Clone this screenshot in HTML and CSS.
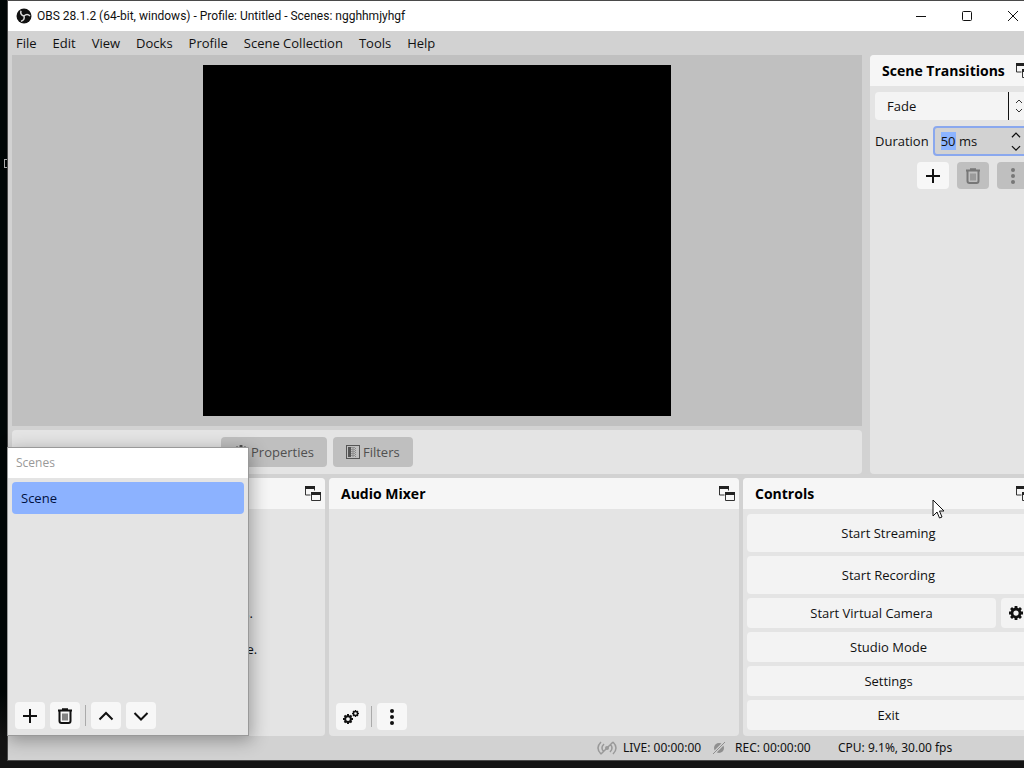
FILE: index.html
```html
<!DOCTYPE html>
<html lang="en">
<head>
<meta charset="utf-8">
<title>OBS 28.1.2</title>
<link rel="stylesheet" href="styles.css">
</head>
<body class="desktop">
<svg class="defs" aria-hidden="true">
  <symbol id="popout" viewBox="0 0 16 16"><path d="M.5 1v8h5M9.500 1v3.500M.5 1h9M6.500 7v7.500h9V7z" fill="none" stroke="#333"/><path d="M0 0h10v3H0zM6 6h10v3H6z" fill="#222"/></symbol>
  <symbol id="plus" viewBox="0 0 16 16"><path d="M8 1v14M1 8h14" fill="none" stroke="currentColor" stroke-width="2"/></symbol>
  <symbol id="trash" viewBox="0 0 16 16"><path d="M1 2.500h14M5 1.200h6M2.500 3v10q0 2 2 2h7q2 0 2-2V3" fill="none" stroke="currentColor" stroke-width="2"/><path d="M6 5.500v7M8 5.500v7M10 5.500v7" stroke="currentColor"/></symbol>
  <symbol id="up" viewBox="0 0 16 16"><path d="M1.500 11.500 8 5l6.500 6.500" fill="none" stroke="currentColor" stroke-width="2"/></symbol>
  <symbol id="down" viewBox="0 0 16 16"><path d="M1.500 5 8 11.500 14.500 5" fill="none" stroke="currentColor" stroke-width="2"/></symbol>
  <symbol id="dots" viewBox="0 0 16 16"><g fill="currentColor"><circle cx="8" cy="2" r="2"/><circle cx="8" cy="8" r="2"/><circle cx="8" cy="14" r="2"/></g></symbol>
  <symbol id="gear" viewBox="0 0 16 16"><circle cx="8" cy="8" r="4.600" fill="none" stroke="currentColor" stroke-width="3.200"/><path d="M8 0v3M8 13v3M0 8h3M13 8h3M2.350 2.350l2.100 2.100M11.550 11.550l2.100 2.100M13.650 2.350l-2.100 2.100M4.450 11.550l-2.100 2.100" stroke="currentColor" stroke-width="3.200"/></symbol>
</svg>
<div class="desktop-icon"></div>
<div class="window">
  <header class="titlebar">
    <svg class="logo" viewBox="0 0 16 16"><circle cx="8" cy="8" r="7.500" fill="#111"/><g fill="none" stroke="#ddd" stroke-width="1.500"><path d="M5 2.800c-.8 2.600.3 4.500 3 5.200"/><path d="M5 2.800c-.8 2.600.3 4.500 3 5.200" transform="rotate(120 8 8)"/><path d="M5 2.800c-.8 2.600.3 4.500 3 5.200" transform="rotate(240 8 8)"/></g></svg>
    <h1 class="title">OBS 28.1.2 (64-bit, windows) - Profile: Untitled - Scenes: ngghhmjyhgf</h1>
    <button class="caption" aria-label="Minimize"><svg viewBox="0 0 10 10"><path d="M0 5.500h10"/></svg></button>
    <button class="caption" aria-label="Maximize"><svg viewBox="0 0 10 10"><rect x=".5" y=".5" width="9" height="9" rx="1"/></svg></button>
    <button class="caption" aria-label="Close"><svg viewBox="0 0 10 10"><path d="m0 0 10 10M10 0 0 10"/></svg></button>
  </header>
  <nav class="menu">
    <button>File</button><button>Edit</button><button>View</button><button>Docks</button><button>Profile</button><button>Scene Collection</button><button>Tools</button><button>Help</button>
  </nav>
  <main class="workspace">
    <div class="upper">
      <div class="center">
        <section class="preview"><div class="canvas"></div></section>
        <section class="context">
          <span class="context-label"></span>
          <button class="tool" disabled><svg class="icon14"><use href="#gear"/></svg>Properties</button>
          <button class="tool" disabled><svg class="icon14" viewBox="0 0 14 14"><rect x=".5" y=".5" width="13" height="13" fill="none" stroke="#555"/><path d="M2 2h3v10H2z" fill="#555"/><path d="M6 2v10M8 2v10" stroke="#666" stroke-dasharray="1 1"/><path d="M7 3v10M9.500 3v10" stroke="#888" stroke-dasharray="1 1"/></svg>Filters</button>
        </section>
      </div>
      <section class="dock">
        <header class="dock-head"><h2>Scene Transitions</h2><svg class="popout"><use href="#popout"/></svg></header>
        <div class="transitions">
          <div class="combo"><select aria-label="Transition"><option>Fade</option></select><svg viewBox="0 0 8 14"><path d="m1 4 3-3 3 3M1 10l3 3 3-3"/></svg></div>
          <div class="duration"><label for="dur">Duration</label>
            <div class="spin"><input id="dur" type="text" value="50 ms"><span class="steps"><button aria-label="Increase"><svg><use href="#up"/></svg></button><button aria-label="Decrease"><svg><use href="#down"/></svg></button></span></div>
          </div>
          <div class="trans-tools"><button class="mini" aria-label="Add transition"><svg><use href="#plus"/></svg></button><button class="mini" aria-label="Remove transition" disabled><svg><use href="#trash"/></svg></button><button class="mini" aria-label="Transition options" disabled><svg><use href="#dots"/></svg></button></div>
        </div>
      </section>
    </div>
    <div class="lower">
      <section class="dock" aria-label="Sources">
        <header class="dock-head"><span></span><svg class="popout"><use href="#popout"/></svg></header>
        <p class="hint">You don't have any sources.<br>Click the + button below,<br>or right click here to add one.</p>
      </section>
      <section class="dock">
        <header class="dock-head"><h2>Audio Mixer</h2><svg class="popout"><use href="#popout"/></svg></header>
        <div class="fill"></div>
        <div class="tools"><button class="mini" aria-label="Advanced audio"><svg viewBox="0 0 16 16"><svg x="0" y="5" width="10" height="10"><use href="#gear"/></svg><svg x="9" y="1" width="7" height="7"><use href="#gear"/></svg></svg></button><i class="sep"></i><button class="mini" aria-label="Mixer menu"><svg><use href="#dots"/></svg></button></div>
      </section>
      <section class="dock">
        <header class="dock-head"><h2>Controls</h2><svg class="popout"><use href="#popout"/></svg></header>
        <div class="controls">
          <button class="tall">Start Streaming</button>
          <button class="tall">Start Recording</button>
          <div class="camera"><button>Start Virtual Camera</button><button aria-label="Virtual camera settings"><svg><use href="#gear"/></svg></button></div>
          <button>Studio Mode</button>
          <button>Settings</button>
          <button>Exit</button>
        </div>
      </section>
    </div>
  </main>
  <footer class="status">
    <svg class="net" viewBox="0 0 20 16"><g fill="none" stroke="#999" stroke-width="1.500"><path d="M4 2Q-2 8 4 14M7 4Q3 8 7 12M16 2q6 6 0 12M13 4q4 4 0 8M4 14 16 2"/></g><circle cx="10" cy="8" r="2" fill="#999"/></svg>
    <span class="live">LIVE: 00:00:00</span>
    <svg class="rec" viewBox="0 0 12 12"><circle cx="6" cy="6" r="5" fill="#8f8f8f"/><path d="M0 12 12 0" stroke="#d2d2d2" stroke-width="3"/><path d="M0 12 12 0" stroke="#8f8f8f"/></svg>
    <span class="rectime">REC: 00:00:00</span>
    <span>CPU: 9.1%, 30.00 fps</span>
  </footer>
</div>
<section class="floating">
  <h2 class="float-title">Scenes</h2>
  <ul class="scenes"><li>Scene</li></ul>
  <div class="tools"><button class="mini" aria-label="Add scene"><svg><use href="#plus"/></svg></button><button class="mini" aria-label="Remove scene"><svg><use href="#trash"/></svg></button><i class="sep"></i><button class="mini" aria-label="Move up"><svg><use href="#up"/></svg></button><button class="mini" aria-label="Move down"><svg><use href="#down"/></svg></button></div>
</section>
<svg class="cursor" viewBox="0 0 13 20"><path d="M1 1v16l4-4 2.500 6 2.500-1-2.500-6H12z" fill="#fff" stroke="#111"/></svg>
<script src="main.js"></script>
</body>
</html>
```
FILE: main.js
```
const duration = document.getElementById("dur");
duration.focus();
duration.setSelectionRange(0, 2);
```
FILE: styles.css
```css
* { box-sizing: border-box; }
body, h1, h2, p, ul { margin: 0; padding: 0; }
button, input, select { font: inherit; color: inherit; border: 0; padding: 0; background: none; }
.defs { position: absolute; width: 0; height: 0; }
.desktop { position: relative; height: 100vh; overflow: hidden; display: flex; flex-direction: column; background: linear-gradient(#000606 90%, #141414 96%); font: 13px/18px "Open Sans", "Noto Sans", sans-serif; color: #111; }
.desktop-icon { position: absolute; left: 4px; top: 159px; width: 8px; height: 9px; border: 1px solid #aaa; }
.window { position: relative; flex: 1; min-height: 0; margin: 1px -14px 8px 8px; display: flex; flex-direction: column; background: #d2d2d2; box-shadow: 0 0 0 1px #4a4a4a; }
.titlebar { height: 30px; background: #fff; display: flex; align-items: center; padding: 0 2px 0 8px; }
.logo { width: 16px; height: 16px; margin-right: 5px; }
.title { flex: 1; font: 400 12px/16px Roboto, "Open Sans", sans-serif; white-space: nowrap; }
.caption { width: 46px; height: 30px; display: flex; align-items: center; justify-content: center; }
.caption svg { width: 10px; height: 10px; fill: none; stroke: #111; overflow: visible; }
.menu { height: 24px; display: flex; gap: 16px; padding: 0 8px; align-items: center; }
.workspace { flex: 1; min-height: 0; display: flex; flex-direction: column; gap: 4px; padding: 0 4px; }
.upper { flex: 1; min-height: 0; display: flex; gap: 8px; }
.upper > .dock { width: 164px; }
.center { flex: 1; display: flex; flex-direction: column; gap: 4px; }
.preview { flex: 1; min-height: 0; background: #c0c0c0; display: flex; justify-content: center; padding: 10px; }
.canvas { height: 100%; aspect-ratio: 4 / 3; background: #000; }
.context { height: 44px; display: flex; align-items: center; gap: 6px; padding: 0 9px; background: #e4e4e4; border-radius: 4px; }
.context-label { width: 194px; }
.tool { height: 30px; padding: 0 13px; display: flex; align-items: center; gap: 3px; background: #bfbfbf; border-radius: 4px; color: #505050; }
.icon14 { width: 14px; height: 14px; }
.dock { background: #e4e4e4; border-radius: 4px; display: flex; flex-direction: column; min-width: 0; overflow: hidden; }
.dock-head { height: 31px; display: flex; align-items: center; justify-content: space-between; background: #f6f6f6; padding: 0 4px 0 12px; }
.dock:last-child .dock-head { padding-right: 2px; }
.dock-head h2 { font-size: 14px; line-height: 18px; font-weight: 700; white-space: nowrap; color: #000; }
.popout { width: 16px; height: 16px; flex: none; }
.transitions { padding: 6px 5px 0; display: flex; flex-direction: column; gap: 6px; }
.combo { height: 28px; display: flex; align-items: center; background: #f4f4f4; border-radius: 4px; }
.combo select { appearance: none; width: 134px; height: 28px; padding-left: 12px; border-right: 1px solid #111; }
.combo svg { width: 8px; height: 14px; margin-left: 6px; fill: none; stroke: #333; }
.duration { display: flex; align-items: center; justify-content: space-between; gap: 4px; }
.spin { flex: 1; min-width: 0; height: 30px; display: flex; border: 2px solid #8aa8ee; border-radius: 4px; background: #d2d2d2; }
.spin input { flex: 1; min-width: 0; padding-left: 6px; outline: none; }
.spin input::selection { background: #8cb4ff; color: #111; }
.steps { width: 16px; display: flex; flex-direction: column; justify-content: space-around; }
.steps button { display: flex; height: 12px; align-items: center; }
.steps svg { width: 10px; height: 10px; }
.trans-tools { display: flex; gap: 8px; justify-content: flex-end; }
.mini { width: 30px; height: 27px; display: flex; align-items: center; justify-content: center; background: #f7f7f7; border-radius: 4px; }
.trans-tools .mini { width: 32px; }
.mini > svg { width: 16px; height: 16px; }
.mini:disabled { background: #bfbfbf; color: #777; }
.lower { height: 258px; display: grid; grid-template-columns: 313fr 410fr 291fr; gap: 4px; }
.hint { flex: 1; display: grid; align-content: center; text-align: center; padding-top: 16px; }
.fill { flex: 1; }
.tools { display: flex; align-items: center; gap: 5px; padding: 0 7px 6px; }
.sep { width: 1px; height: 21px; background: #aaa; }
.controls { flex: 1; padding: 5px 4px 0; display: flex; flex-direction: column; gap: 4px; }
.controls button { height: 30px; background: #f3f3f3; border-radius: 4px; }
.controls .tall { height: 38px; }
.camera { display: flex; gap: 5px; }
.camera button { flex: 1; }
.camera button:last-child { flex: none; width: 29px; display: flex; align-items: center; justify-content: center; }
.camera svg { width: 14px; height: 14px; }
.status { height: 24px; display: flex; align-items: center; padding-left: 589px; font-size: 12px; font-family: "Noto Sans", "Open Sans", sans-serif; }
.net { width: 20px; height: 16px; margin-right: 6px; }
.live { width: 90px; }
.rec { width: 12px; height: 12px; margin-right: 10px; }
.rectime { width: 103px; }
.floating { position: absolute; left: 8px; bottom: 33px; width: 240px; height: 287px; display: flex; flex-direction: column; background: #e4e4e4; box-shadow: 0 0 0 1px #999, 2px 4px 16px 2px rgba(0, 0, 0, .3); }
.float-title { height: 30px; padding-left: 8px; font-size: 12px; line-height: 30px; font-weight: 400; background: #fff; color: #999; }
.scenes { flex: 1; padding: 4px; list-style: none; }
.scenes li { height: 32px; padding-left: 9px; line-height: 32px; border-radius: 4px; background: #8cb2ff; color: #001040; }
.cursor { position: absolute; left: 932px; top: 499px; width: 13px; height: 20px; }
```
